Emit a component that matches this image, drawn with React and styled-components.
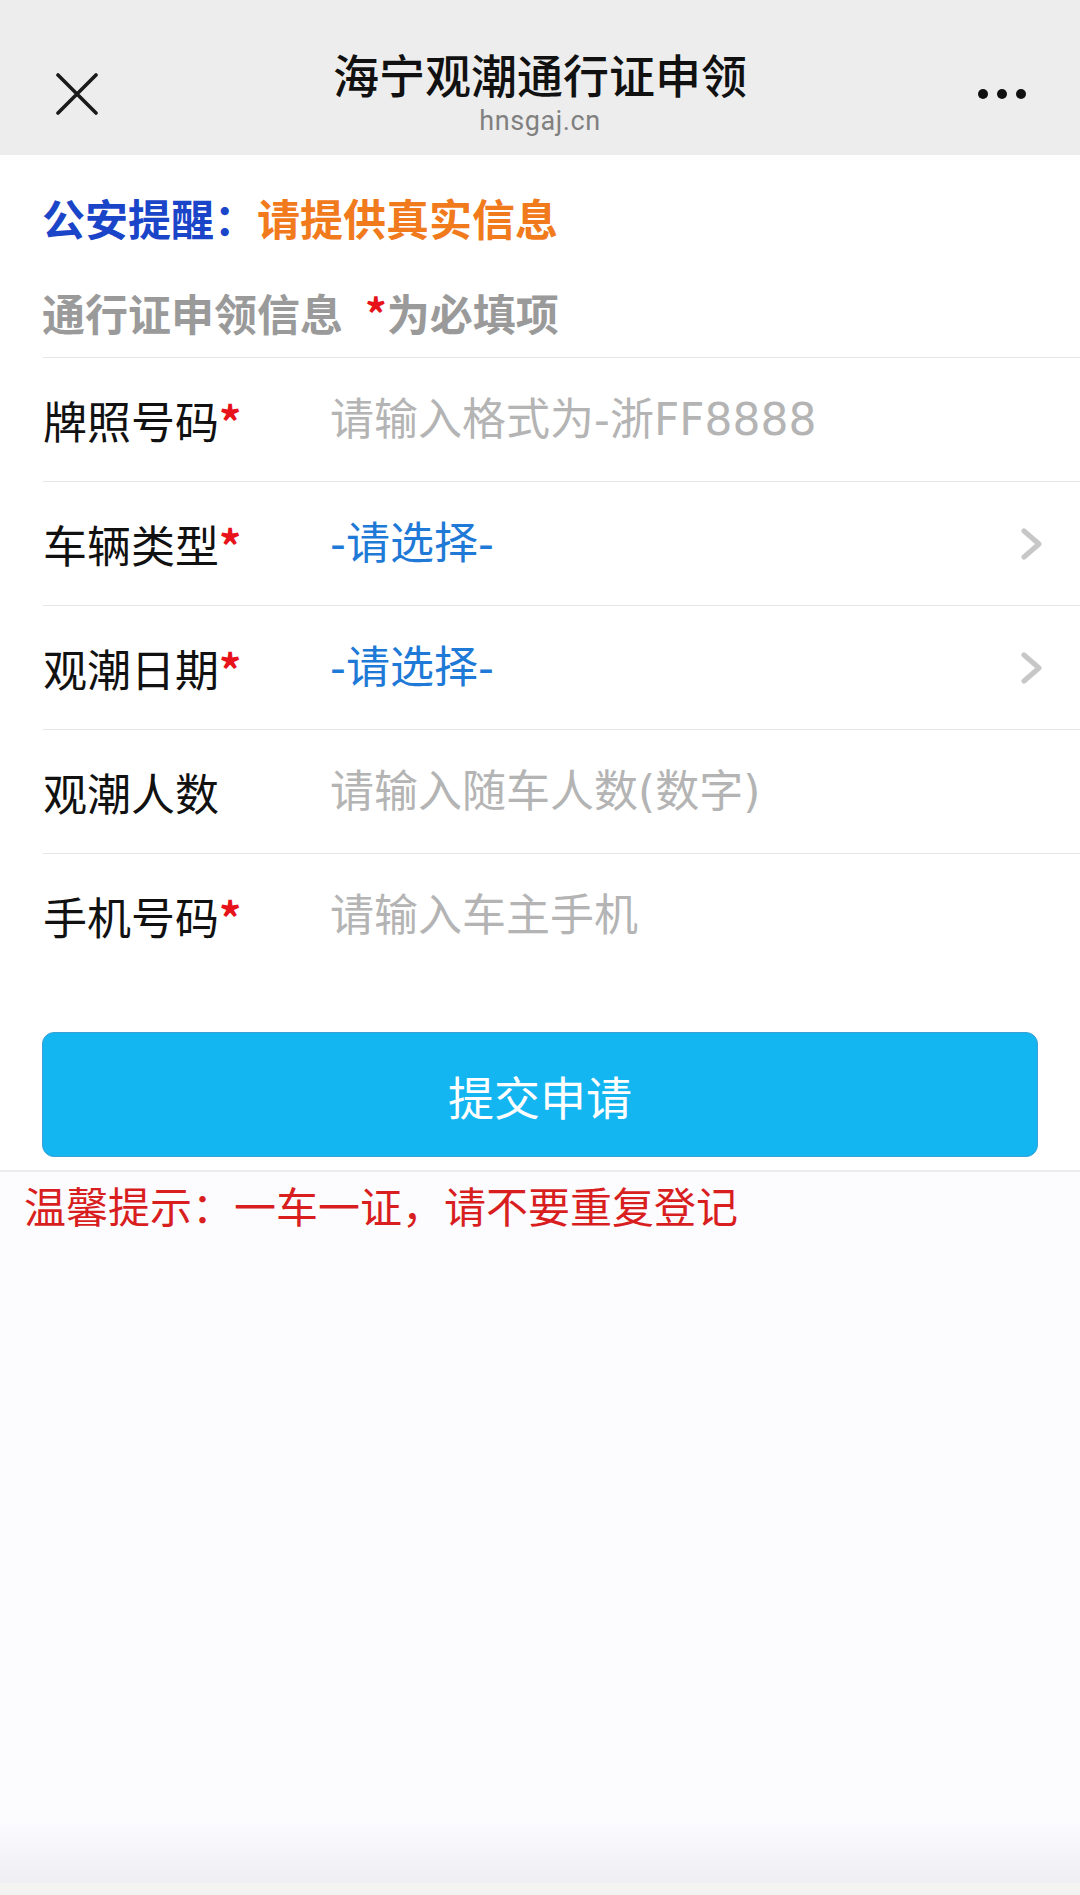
import React from 'react'
import styled, { createGlobalStyle } from 'styled-components'

const GlobalStyle = createGlobalStyle`
  html, body {
    margin: 0;
    padding: 0;
    background: #ffffff;
  }
  * {
    box-sizing: border-box;
  }
`

const CJK = `"Noto Sans CJK SC", "Noto Sans", sans-serif`
// wider latin glyphs for digits / hyphens, CJK falls through
const MIXED = `"DejaVu Sans", "Noto Sans CJK SC", sans-serif`

const fields = [
  { label: '牌照号码', required: true, placeholder: '请输入格式为-浙FF8888' },
  { label: '车辆类型', required: true, select: true },
  { label: '观潮日期', required: true, select: true },
  { label: '观潮人数', required: false, placeholder: '请输入随车人数(数字)' },
  { label: '手机号码', required: true, placeholder: '请输入车主手机' },
]

const CloseIcon = () => (
  <svg width="42" height="42" viewBox="0 0 42 42">
    <path d="M2 2 L40 40 M40 2 L2 40" stroke="#1a1a1a" strokeWidth="3.6" strokeLinecap="round" />
  </svg>
)

const MoreIcon = () => (
  <svg width="50" height="12" viewBox="0 0 50 12">
    <circle cx="6" cy="6" r="5" fill="#111" />
    <circle cx="25" cy="6" r="5" fill="#111" />
    <circle cx="44" cy="6" r="5" fill="#111" />
  </svg>
)

const Chevron = () => (
  <svg width="22" height="32" viewBox="0 0 22 32">
    <path d="M3 3 L18 16 L3 29" fill="none" stroke="#c7c7c7" strokeWidth="5" strokeLinecap="round" strokeLinejoin="round" />
  </svg>
)

const App = () => {
  return (
    <Page>
      <GlobalStyle />
      <NavBar>
        <NavSide>
          <CloseIcon />
        </NavSide>
        <NavTitle>
          <h1>海宁观潮通行证申领</h1>
          <span>hnsgaj.cn</span>
        </NavTitle>
        <NavSide $right>
          <MoreIcon />
        </NavSide>
      </NavBar>

      <Main>
        <Notice>
          <span className="police">公安提醒：</span>
          <span className="warn">请提供真实信息</span>
        </Notice>
        <SectionHead>
          通行证申领信息<Star $gap>*</Star>为必填项
        </SectionHead>

        <FieldList>
          {fields.map((f) => (
            <FieldRow key={f.label}>
              <Label>
                {f.label}
                {f.required && <Star>*</Star>}
              </Label>
              {f.select ? (
                <SelectValue>
                  <span>-请选择-</span>
                  <Chevron />
                </SelectValue>
              ) : (
                <Input type="text" placeholder={f.placeholder} />
              )}
            </FieldRow>
          ))}
        </FieldList>

        <SubmitButton type="button">提交申请</SubmitButton>
      </Main>

      <TipArea>
        <p>温馨提示：一车一证，请不要重复登记</p>
      </TipArea>
    </Page>
  )
}

export default App

const Page = styled.div`
  display: flex;
  flex-direction: column;
  min-height: 1895px;
  width: 1080px;
  font-family: ${CJK};
`

const NavBar = styled.header`
  display: grid;
  grid-template-columns: 1fr auto 1fr;
  height: 155px;
  padding: 46px 0 15px;
  background: #ededed;
`

const NavSide = styled.div`
  display: flex;
  align-items: center;
  justify-content: ${(p) => (p.$right ? 'flex-end' : 'flex-start')};
  padding: ${(p) => (p.$right ? '2px 53px 0 0' : '2px 0 0 56px')};
`

const NavTitle = styled.div`
  display: flex;
  flex-direction: column;
  align-items: center;
  align-self: start;

  h1 {
    margin: 0;
    font-family: ${CJK};
    font-size: 46px;
    font-weight: 500;
    line-height: 54px;
    color: #111;
  }
  span {
    margin-top: 6px;
    font-family: Roboto, "Liberation Sans", sans-serif;
    font-size: 27px;
    line-height: 30px;
    letter-spacing: 0.6px;
    color: #808080;
  }
`

const Main = styled.main`
  display: flex;
  flex-direction: column;
  padding: 36px 0 13px;
  background: #fff;
`

const Notice = styled.div`
  padding-left: 42px;
  font-size: 43px;
  font-weight: 700;
  line-height: 52px;

  .police {
    color: #1b45c8;
  }
  .warn {
    color: #f07a1c;
  }
`

const SectionHead = styled.div`
  margin-top: 43px;
  padding: 0 0 19px 42px;
  font-size: 43px;
  font-weight: 700;
  line-height: 52px;
  color: #9a9a9a;
`

const Star = styled.span`
  margin-left: ${(p) => (p.$gap ? '22px' : '0')};
  color: #e8121a;
  font-weight: 700;
`

const FieldList = styled.div`
  margin-left: 43px;
`

const FieldRow = styled.div`
  display: flex;
  align-items: center;
  height: 124px;
  border-top: 1px solid #e6e6e6;
  padding-right: 37px;
`

const Label = styled.div`
  width: 287px;
  flex-shrink: 0;
  font-size: 44px;
  color: #111;
  line-height: 52px;
`

const Input = styled.input`
  flex: 1;
  min-width: 0;
  border: none;
  outline: none;
  padding: 0;
  background: transparent;
  font-family: ${MIXED};
  font-size: 44px;
  line-height: 52px;
  color: #111;

  &::placeholder {
    font-family: ${MIXED};
    color: #b4b4b4;
  }
`

const SelectValue = styled.div`
  flex: 1;
  display: flex;
  align-items: center;
  justify-content: space-between;
  font-family: ${MIXED};
  font-size: 44px;
  line-height: 52px;
  color: #1e7ad6;
`

const SubmitButton = styled.button`
  margin: 55px 42px 0;
  height: 125px;
  border: 1px solid #3a9fd4;
  border-radius: 12px;
  background: #14b6f2;
  color: #fff;
  font-family: ${CJK};
  font-size: 46px;
  cursor: pointer;
`

const TipArea = styled.section`
  flex: 1;
  border-top: 2px solid #ececf0;
  padding: 8px 24px 0;
  background: linear-gradient(
    to bottom,
    #fcfbfe 0,
    #fcfbfe calc(100% - 75px),
    #efeef2 calc(100% - 12px),
    #f3f4f2 calc(100% - 12px)
  );

  p {
    margin: 0;
    font-size: 42px;
    line-height: 50px;
    color: #d81e1e;
  }
`
